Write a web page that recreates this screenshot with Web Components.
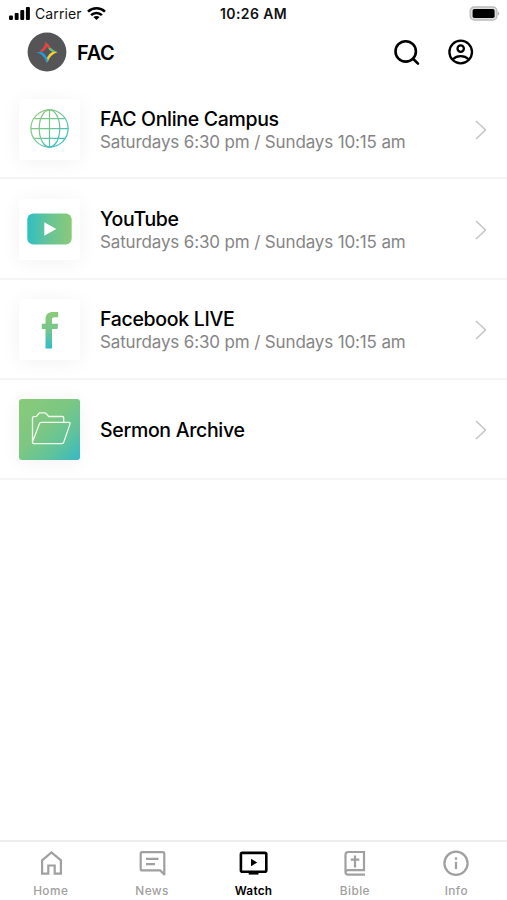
<!DOCTYPE html>
<html lang="en">
<head>
<meta charset="utf-8">
<title>FAC</title>
<style>
html,body{margin:0;height:100%;background:#fff}
body{font-family:Inter,"Liberation Sans",sans-serif;overflow:hidden}
</style>
</head>
<body>
<fac-app></fac-app>
<script>
const define = (name, html) => {
  customElements.define(name, class extends HTMLElement {
    constructor() {
      super();
      const t = document.createElement('template');
      t.innerHTML = html;
      this.attachShadow({mode: 'open'}).append(t.content.cloneNode(true));
    }
  });
};

define('status-bar', `
<style>
:host{display:grid;grid-template-columns:1fr auto 1fr;align-items:center;height:27px;padding:0 7px 0 9px;box-sizing:border-box;color:#111}
.left{display:flex;align-items:center}
.carrier{font-size:14px;letter-spacing:.1px;margin:0 5.5px 0 5px}
.time{font-size:14px;font-weight:600;letter-spacing:.4px;margin-left:-2px}
.right{display:flex;justify-content:flex-end}
svg{display:block}
</style>
<div class="left">
<svg width="21" height="13" viewBox="0 0 21 13" fill="#000"><rect y="8.5" width="3.9" height="4.5" rx="1"/><rect x="5.7" y="6" width="3.9" height="7" rx="1"/><rect x="11.3" y="3" width="3.9" height="10" rx="1"/><rect x="16.9" y="0" width="4" height="13" rx="1"/></svg>
<span class="carrier">Carrier</span>
<svg width="19" height="13" viewBox="0 0 19 13" fill="none" stroke="#000" stroke-width="2.6"><path d="M1 4.6C5.8.2 13.2.2 18 4.6M4.1 8.1c3-2.9 7.8-2.9 10.8 0"/><path d="M9.5 13 6.4 10.1c1.7-1.5 4.5-1.5 6.2 0Z" fill="#000" stroke="none"/></svg>
</div>
<span class="time">10:26 AM</span>
<div class="right">
<svg width="31" height="15" viewBox="0 0 31 15"><rect x="1.2" y="1" width="26.8" height="13" rx="4" fill="#ddd" stroke="#bbb" stroke-width="1.3"/><rect x="3.6" y="3" width="22" height="9" rx="1.8" fill="#000"/><path d="M29.1 5.4c1.6.8 1.6 3.4 0 4.2Z" fill="#aaa"/></svg>
</div>`);

define('app-header', `
<style>
:host{display:flex;align-items:center;height:50px;padding:0 33px 0 27px;box-sizing:border-box}
h1{margin:1px auto 0 10px;font-size:20px;font-weight:600;letter-spacing:-.3px;line-height:24px;color:#000}
svg{display:block;flex:none}
.bar-icon{margin-left:27px}
</style>
<svg width="40" height="40" viewBox="0 0 40 40"><circle cx="20" cy="20" r="19.4" fill="#555557"/>
<path d="M20.600 11.500Q22.800 17.200 30.600 20H25.300Q21.800 18.500 20.200 14.600Z" fill="#76bd72"/>
<path d="M30.600 20Q22.800 22.800 20.600 30.400L20 25.600Q21.600 21.700 25.300 20Z" fill="#f4cf38"/>
<path d="M20.600 30.400H19.200Q17.200 22.800 9.600 20H14.700Q18.400 21.700 20 25.600Z" fill="#249bd8"/>
<path d="M12.600 18.900Q17.600 16.800 18.500 9.600L23.300 15.600L21.900 16.800L20.100 14.600Q18.500 18.400 14.700 20Z" fill="#e8433c"/></svg>
<h1>FAC</h1>
<svg width="27" height="27" viewBox="0 0 27 27" fill="none" stroke="#000" stroke-width="2.6" stroke-linecap="round"><circle cx="11.7" cy="12.4" r="10.2"/><path d="m19.3 20 4.7 4.7"/></svg>
<svg class="bar-icon" width="26" height="26" viewBox="0 0 26 26" fill="none" stroke="#000" stroke-width="2.3"><circle cx="12.7" cy="13" r="11.3"/><circle cx="12.7" cy="9.6" r="3.2"/><path d="M4.9 20.2c4-4.1 11.6-4.1 15.6 0"/></svg>`);

define('channel-row', `
<style>
:host{display:flex;align-items:center;height:100.25px;padding:0 19px;box-sizing:border-box;border-bottom:2px solid #f4f4f4}
.tile{display:flex;align-items:center;justify-content:center;width:61px;height:61px;flex:none;background:#fff;border-radius:3px;box-shadow:0 2px 20px rgba(0,0,0,.055);margin-top:2px}
:host([filled]) .tile{background:linear-gradient(135deg,#8aca79 0%,#7cc783 45%,#60c39b 72%,#35b9c5 100%)}
.text{flex:1;margin-left:20px;padding-top:4px;white-space:nowrap}
:host([filled]) .text{padding-top:2px}
.title{font-size:19.5px;font-weight:500;line-height:24px;letter-spacing:-.32px;color:#000}
.sub{font-size:17px;line-height:23px;letter-spacing:-.14px;color:#858585}
.arrow{display:block;flex:none;margin-top:3px}
</style>
<div class="tile"><slot name="icon"></slot></div>
<div class="text"><div class="title"><slot></slot></div><div class="sub"><slot name="sub"></slot></div></div>
<svg class="arrow" width="14" height="22" viewBox="0 0 14 22" fill="none" stroke="#c6c6c8" stroke-width="1.6"><path d="m2 2 9.5 9L2 20"/></svg>`);

define('tab-item', `
<style>
:host{display:flex;flex-direction:column;align-items:center;flex:1;color:#a0a0a0;padding-top:7px}
:host([active]){color:#000}
.icon{height:28px}
.label{font-size:11.8px;font-weight:500;line-height:16px;letter-spacing:.45px;margin-top:6px}
:host([active]) .label{font-weight:600;letter-spacing:.25px}
</style>
<div class="icon"><slot name="icon"></slot></div><div class="label"><slot></slot></div>`);

define('tab-bar', `
<style>
:host{display:flex;height:60px;border-top:2px solid #ececec;box-sizing:border-box;background:#fff}
</style><slot></slot>`);

define('fac-app', `
<style>
:host{display:flex;flex-direction:column;height:900px;width:507px;background:#fff}
main{flex:1;padding-top:2px}
svg{display:block}
.globe{margin-top:-1px}
.folder{margin:-3px 0 0 3px}
</style>
<status-bar></status-bar>
<app-header></app-header>
<main>
<channel-row>
<svg class="globe" slot="icon" width="39" height="39" viewBox="0 0 39 39" fill="none" stroke="url(#g)" stroke-width="1.2"><defs><linearGradient id="g" gradientUnits="userSpaceOnUse" x1="4" y1="4" x2="35" y2="35"><stop offset="0" stop-color="#8bca79"/><stop offset=".5" stop-color="#73c692"/><stop offset="1" stop-color="#2dbcd0"/></linearGradient></defs><circle cx="19.5" cy="19.5" r="18.6"/><ellipse cx="19.5" cy="19.5" rx="10.3" ry="18.6"/><path d="M19.5 1v37.2M1 19.6h37.2M4.3 9.6h30.4M4.3 29.4h30.4"/></svg>
FAC Online Campus<span slot="sub">Saturdays 6:30 pm / Sundays 10:15 am</span></channel-row>
<channel-row>
<svg slot="icon" width="45" height="32" viewBox="0 0 45 32"><defs><linearGradient id="y"><stop offset="0" stop-color="#2fbfc5"/><stop offset=".5" stop-color="#68c494"/><stop offset="1" stop-color="#8aca78"/></linearGradient></defs><rect x=".3" y=".5" width="44.4" height="31" rx="6" fill="url(#y)"/><path d="m17.3 9.3 12 6.7-12 6.7Z" fill="#fff"/></svg>
YouTube<span slot="sub">Saturdays 6:30 pm / Sundays 10:15 am</span></channel-row>
<channel-row>
<svg slot="icon" width="18" height="38" viewBox="0 0 18 38"><defs><linearGradient id="f" x2="0" y2="1"><stop offset="0" stop-color="#8bca78"/><stop offset=".5" stop-color="#75c68c"/><stop offset="1" stop-color="#2dbdcc"/></linearGradient></defs><path d="M4.5 37.5V18H.8v-5.300h3.700V8.500C4.500 3 7.300 1 12 1h5.200v5.200h-3.500c-2.300 0-2.700.9-2.700 2.800v3.700h6.200L16.500 18H11v19.500Z" fill="url(#f)"/></svg>
Facebook LIVE<span slot="sub">Saturdays 6:30 pm / Sundays 10:15 am</span></channel-row>
<channel-row filled>
<svg class="folder" slot="icon" width="40" height="34" viewBox="0 0 40 34" fill="none" stroke="#f2faee" stroke-width="1.3" stroke-linejoin="round"><path d="M1.5 31V7q0-1.200 1.200-1.300L5.500 5.300 7.800 2.500q.5-.6 1.300-.6h4.600q.8 0 1.300.6l2.700 3h13.800q1.200 0 1.200 1.200v4.700M1.500 31 8.300 13q.5-1.600 2-1.600h27.500q1.700 0 1.200 1.500l-6.200 18.200q-.5 1.500-2 1.500H2.800q-1.500 0-1.300-1.600Z"/></svg>
Sermon Archive</channel-row>
</main>
<tab-bar>
<tab-item><svg slot="icon" width="26" height="28" viewBox="0 0 26 28" fill="none" stroke="currentColor" stroke-width="2.2"><path d="M4.1 24.700V11.300L13.500 3.500l9.400 7.800v13.400h-6.200v-8.200h-6.400v8.200Z"/></svg>Home</tab-item>
<tab-item><svg slot="icon" width="28" height="28" viewBox="0 0 28 28" fill="none" stroke="currentColor" stroke-width="2.2" stroke-linejoin="round"><path d="M4.200 3.200h20.600q1.500 0 1.500 1.500v20.800l-4.100-4.100h-18q-1.500 0-1.500-1.500V4.700q0-1.500 1.500-1.500Z"/><path d="M8 9.800h12.500M8 15.200h9"/></svg>News</tab-item>
<tab-item active><svg slot="icon" width="30" height="28" viewBox="0 0 30 28" fill="none" stroke="currentColor" stroke-width="2.6"><rect x="1.9" y="3.9" width="25.4" height="18.8" rx="1.5"/><path d="M9.700 22h9.800v3.600H9.700Z" fill="currentColor" stroke="none"/><path d="m12 9.800 6.200 3.700-6.200 3.700Z" fill="currentColor" stroke="none"/></svg>Watch</tab-item>
<tab-item><svg slot="icon" width="26" height="28" viewBox="0 0 26 28" fill="none" stroke="currentColor" stroke-width="2.2"><path d="M23 25.600H6.200q-2.700 0-2.700-2.700V5.700q0-2.700 2.700-2.700H22v18.200H6.200q-2.700 0-2.700 2"/><path d="M13 6.500v12M8.700 10.600h8.600"/></svg>Bible</tab-item>
<tab-item><svg slot="icon" width="28" height="28" viewBox="0 0 28 28" fill="none" stroke="currentColor" stroke-width="2.2"><circle cx="14" cy="14.300" r="11.600"/><path d="M14 12.700v7.300M14 8.200v2.500"/></svg>Info</tab-item>
</tab-bar>`);
</script>
</body>
</html>
